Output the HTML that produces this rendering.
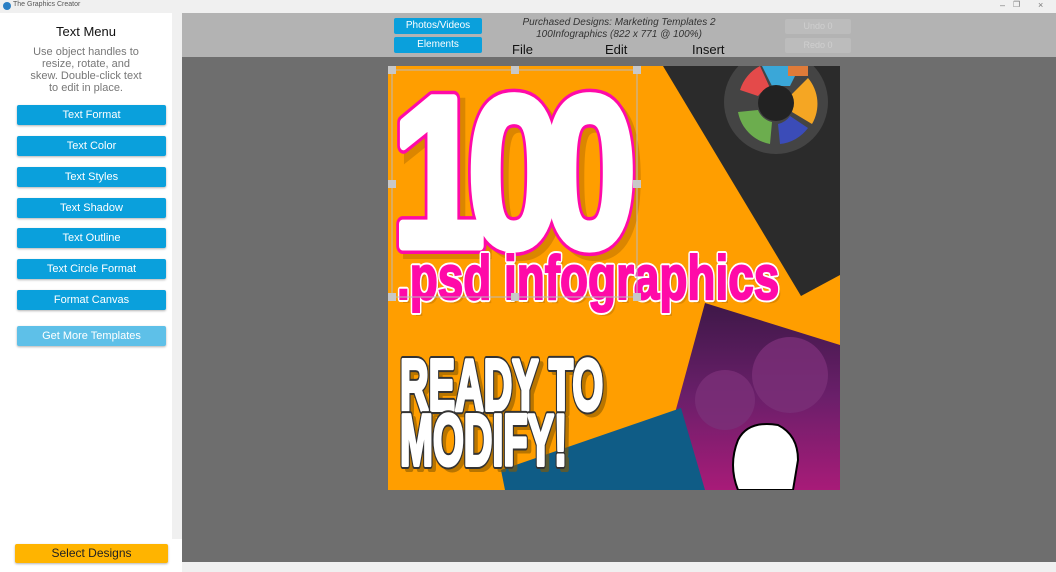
<!DOCTYPE html>
<html><head><meta charset="utf-8"><style>
*{margin:0;padding:0;box-sizing:border-box}
body{width:1056px;height:572px;overflow:hidden;background:#fff;font-family:"Liberation Sans",sans-serif;position:relative}
.abs{position:absolute}
.btn{position:absolute;left:17px;width:149px;height:20px;background:#0aa0dc;color:#fff;font-size:11px;text-align:center;line-height:20px;border-radius:2px;box-shadow:0 1px 2px rgba(0,0,0,.3)}
.tb{position:absolute;background:#0aa0dc;color:#fff;font-size:10px;text-align:center;border-radius:2px;width:88px;height:16px;line-height:16px;left:394px}
.menu{position:absolute;top:42px;font-size:13px;color:#111}
.ur{position:absolute;left:785px;width:66px;height:15px;background:#bcbcbc;color:#cfcfcf;font-size:9px;text-align:center;line-height:15px;border-radius:2px}
.h{position:absolute;width:8px;height:8px;background:#c8c8c8}
</style></head><body>
<div class="abs" style="left:0;top:0;width:1056px;height:13px;background:#f0f0f0"></div>
<div class="abs" style="left:3px;top:2px;width:8px;height:8px;border-radius:50%;background:#2a7fc4"></div>
<div class="abs" style="left:13px;top:1px;font-size:7px;color:#555">The Graphics Creator</div>
<div class="abs" style="left:1000px;top:0;font-size:9px;color:#777">–</div>
<div class="abs" style="left:1013px;top:0;font-size:8px;color:#777">❐</div>
<div class="abs" style="left:1038px;top:0;font-size:9px;color:#777">×</div>

<div class="abs" style="left:172px;top:13px;width:10px;height:526px;background:#f0f0f0"></div>
<div class="abs" style="left:0;top:24px;width:182px;text-align:center;font-size:13px;color:#111;padding-right:10px">Text Menu</div>
<div class="abs" style="left:0;top:46px;width:182px;padding-right:10px;text-align:center;font-size:11px;line-height:12px;color:#777">Use object handles to<br>resize, rotate, and<br>skew. Double-click text<br>to edit in place.</div>
<div class="btn" style="top:105px">Text Format</div>
<div class="btn" style="top:136px">Text Color</div>
<div class="btn" style="top:167px">Text Styles</div>
<div class="btn" style="top:198px">Text Shadow</div>
<div class="btn" style="top:228px">Text Outline</div>
<div class="btn" style="top:259px">Text Circle Format</div>
<div class="btn" style="top:290px">Format Canvas</div>
<div class="btn" style="top:326px;background:#5ec0e8">Get More Templates</div>
<div class="btn" style="top:544px;left:15px;width:153px;height:19px;line-height:19px;background:#ffb400;color:#222;font-size:12px">Select Designs</div>

<div class="abs" style="left:182px;top:13px;width:874px;height:44px;background:#b3b3b3"></div>
<div class="abs" style="left:182px;top:57px;width:874px;height:505px;background:#6e6e6e"></div>
<div class="abs" style="left:182px;top:562px;width:874px;height:10px;background:#f0f0f0"></div>
<div class="tb" style="top:18px">Photos/Videos</div>
<div class="tb" style="top:37px">Elements</div>
<div class="abs" style="left:480px;top:17px;width:278px;text-align:center;font-size:10px;line-height:12px;font-style:italic;color:#333">Purchased Designs: Marketing Templates 2<br>100Infographics (822 x 771 @ 100%)</div>
<div class="menu" style="left:512px">File</div>
<div class="menu" style="left:605px">Edit</div>
<div class="menu" style="left:692px">Insert</div>
<div class="ur" style="top:19px">Undo 0</div>
<div class="ur" style="top:38px">Redo 0</div>

<svg class="abs" style="left:388px;top:66px" width="452" height="424" viewBox="388 66 452 424">
<defs><linearGradient id="pg" x1="0" y1="0" x2="0" y2="1"><stop offset="0" stop-color="#3e1848"/><stop offset=".5" stop-color="#6a1f6a"/><stop offset="1" stop-color="#a81b78"/></linearGradient></defs>
<rect x="388" y="66" width="452" height="424" fill="#ff9e00"/>
<polygon points="663,66 840,66 840,275 801,296" fill="#2b2b2b"/>
<circle cx="776" cy="102" r="52" fill="#444"/>
<path d="M740 90 A40 40 0 0 1 760 66 L770 88 A20 20 0 0 0 758 96Z" fill="#e44a4a"/>
<path d="M808 78 A40 40 0 0 1 812 124 L792 112 A20 20 0 0 0 790 96Z" fill="#f5a623"/>
<path d="M738 112 A40 40 0 0 0 770 144 L772 122 A20 20 0 0 1 758 110Z" fill="#6cad4e"/>
<path d="M780 144 A40 40 0 0 0 808 128 L790 116 A20 20 0 0 1 778 124Z" fill="#3b4cb8"/>
<path d="M762 66 L800 66 L790 86 L772 86Z" fill="#3aa7d8"/>
<rect x="788" y="66" width="20" height="10" fill="#e07b39"/>
<circle cx="776" cy="103" r="18" fill="#222"/>
<polygon points="705,303 840,345 840,490 700,490 675,413" fill="url(#pg)"/>
<circle cx="790" cy="375" r="38" fill="#7a2f78" opacity=".8"/>
<circle cx="725" cy="400" r="30" fill="#7a2f78" opacity=".8"/>
<polygon points="501,470 681,408 705,490 505,490" fill="#0f5c86"/>
<path d="M738 440 q10-20 40-15 q20 10 20 35 l-5 30 h-55 q-10-25 0-50z" fill="#fff" stroke="#000" stroke-width="2"/>
<g font-family="Liberation Sans,sans-serif" font-weight="bold">
<text transform="translate(398,252) scale(0.78,1)" font-size="214" fill="#b06a00" opacity=".45" stroke="#b06a00" stroke-width="14" letter-spacing="-22">100</text>
<text transform="translate(392,246) scale(0.78,1)" font-size="214" fill="#fff" stroke="#ff0aa8" stroke-width="16" stroke-linejoin="round" letter-spacing="-22">100</text>
<text transform="translate(392,246) scale(0.78,1)" font-size="214" fill="#fff" stroke="#fff" stroke-width="9" stroke-linejoin="round" letter-spacing="-22">100</text>
<text transform="translate(400,303) scale(0.74,1)" font-size="62" fill="#b06a00" opacity=".4">.psd infographics</text>
<text transform="translate(397,299) scale(0.74,1)" font-size="62" fill="#ff0aa8" stroke="#fff" stroke-width="6" stroke-linejoin="round" paint-order="stroke">.psd infographics</text>
<text transform="translate(397,299) scale(0.74,1)" font-size="62" fill="#ff0aa8" stroke="#ff0aa8" stroke-width="2">.psd infographics</text>
<g stroke-linejoin="round">
<text transform="translate(404,414) scale(0.55,1)" font-size="72" fill="#8a5a00" opacity=".6" stroke="#8a5a00" stroke-width="6">READY TO</text>
<text transform="translate(404,469) scale(0.55,1)" font-size="72" fill="#8a5a00" opacity=".6" stroke="#8a5a00" stroke-width="6">MODIFY!</text>
<text transform="translate(400,410) scale(0.55,1)" font-size="72" fill="#fff" stroke="#333" stroke-width="8">READY TO</text>
<text transform="translate(400,410) scale(0.55,1)" font-size="72" fill="#fff" stroke="#fff" stroke-width="4">READY TO</text>
<text transform="translate(400,465) scale(0.55,1)" font-size="72" fill="#fff" stroke="#333" stroke-width="8">MODIFY!</text>
<text transform="translate(400,465) scale(0.55,1)" font-size="72" fill="#fff" stroke="#fff" stroke-width="4">MODIFY!</text>
</g>
</g>
<rect x="392" y="70" width="245" height="227" fill="none" stroke="#bbb" stroke-width="1"/>
</svg>
<div class="h" style="left:388px;top:66px"></div><div class="h" style="left:511px;top:66px"></div><div class="h" style="left:633px;top:66px"></div>
<div class="h" style="left:388px;top:180px"></div><div class="h" style="left:633px;top:180px"></div>
<div class="h" style="left:388px;top:293px"></div><div class="h" style="left:511px;top:293px"></div><div class="h" style="left:633px;top:293px"></div>
</body></html>
